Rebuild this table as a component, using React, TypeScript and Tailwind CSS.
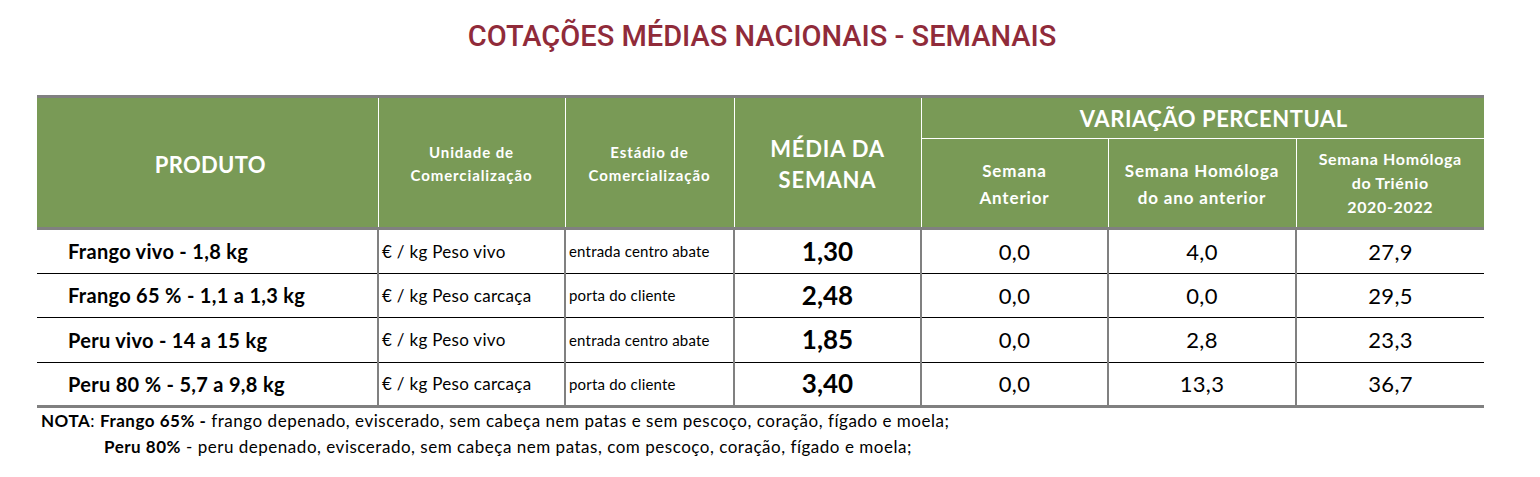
import React from 'react';

const rows = [
  { produto: 'Frango vivo - 1,8 kg', unidade: '€ / kg Peso vivo', estadio: 'entrada centro abate', media: '1,30', anterior: '0,0', homologa: '4,0', trienio: '27,9' },
  { produto: 'Frango 65 % - 1,1 a 1,3 kg', unidade: '€ / kg Peso carcaça', estadio: 'porta do cliente', media: '2,48', anterior: '0,0', homologa: '0,0', trienio: '29,5' },
  { produto: 'Peru vivo - 14 a 15 kg', unidade: '€ / kg Peso vivo', estadio: 'entrada centro abate', media: '1,85', anterior: '0,0', homologa: '2,8', trienio: '23,3' },
  { produto: 'Peru 80 % - 5,7 a 9,8 kg', unidade: '€ / kg Peso carcaça', estadio: 'porta do cliente', media: '3,40', anterior: '0,0', homologa: '13,3', trienio: '36,7' },
];

const head = 'bg-[#799a56] text-white font-bold text-center align-middle border-white';
const cell = 'border-b border-b-black border-l-2 border-l-[#808080] align-middle';

export default function App() {
  return (
    <div className="w-[1540px] h-[477px] bg-white overflow-hidden" style={{ fontFamily: 'Lato, "Open Sans", sans-serif' }}>
      <h1
        className="pt-[17px] pr-[16px] h-[95px] text-center text-[29px] leading-[38px] font-medium text-[#902b3a]"
        style={{ fontFamily: 'Roboto, "Liberation Sans", sans-serif' }}
      >
        COTAÇÕES MÉDIAS NACIONAIS - SEMANAIS
      </h1>

      <table className="ml-[37px] w-[1447px] table-fixed border-collapse border-t-[3px] border-t-[#808080]">
        <colgroup>
          <col className="w-[341px]" />
          <col className="w-[187px]" />
          <col className="w-[169px]" />
          <col className="w-[187px]" />
          <col className="w-[187px]" />
          <col className="w-[188px]" />
          <col className="w-[188px]" />
        </colgroup>
        <thead>
          <tr className="h-[42px]">
            <th rowSpan={2} className={`${head} text-[22px] tracking-[0.3px] pt-[3px] pl-[6px]`}>PRODUTO</th>
            <th rowSpan={2} className={`${head} border-l text-[15px] tracking-[0.9px] leading-[23px] pt-[2px]`}>
              Unidade de<br />Comercialização
            </th>
            <th rowSpan={2} className={`${head} border-l text-[15px] tracking-[0.9px] leading-[23px] pt-[2px]`}>
              Estádio de<br />Comercialização
            </th>
            <th rowSpan={2} className={`${head} border-l text-[22px] tracking-[0.8px] leading-[31px] pt-[3px]`}>
              MÉDIA DA<br />SEMANA
            </th>
            <th colSpan={3} className={`${head} border-l border-b text-[22px] tracking-[0.55px] pl-[22px]`}>VARIAÇÃO PERCENTUAL</th>
          </tr>
          <tr className="h-[90px]">
            <th className={`${head} border-l text-[17px] tracking-[0.85px] leading-[27px] pt-[2px]`}>
              Semana<br />Anterior
            </th>
            <th className={`${head} border-l text-[17px] tracking-[0.85px] leading-[27px] pt-[2px]`}>
              Semana Homóloga<br />do ano anterior
            </th>
            <th className={`${head} border-l text-[16px] tracking-[0.65px] leading-[24px]`}>
              Semana Homóloga<br />do Triénio<br />2020-2022
            </th>
          </tr>
        </thead>
        <tbody>
          {rows.map((r, i) => {
            const edge = i === 0 ? 'border-t-[3px] border-t-[#808080]' : '';
            const last = i === rows.length - 1 ? 'border-b-[3px] !border-b-[#808080]' : '';
            return (
              <tr key={i} className="h-[44.5px] text-black">
                <td className={`border-b border-b-black align-middle pl-[31px] text-[20px] tracking-[0.3px] font-bold ${edge} ${last}`}>{r.produto}</td>
                <td className={`${cell} ${edge} ${last} pl-[3px] text-[17px] tracking-[0.3px]`}>{r.unidade}</td>
                <td className={`${cell} ${edge} ${last} pl-[3px] text-[15px] tracking-[0.2px]`}>{r.estadio}</td>
                <td className={`${cell} ${edge} ${last} text-center text-[26px] font-bold`}>{r.media}</td>
                <td className={`${cell} ${edge} ${last} text-center text-[22px] tracking-[0.3px]`}>{r.anterior}</td>
                <td className={`${cell} ${edge} ${last} text-center text-[22px] tracking-[0.3px]`}>{r.homologa}</td>
                <td className={`${cell} ${edge} ${last} text-center text-[22px] tracking-[0.3px]`}>{r.trienio}</td>
              </tr>
            );
          })}
        </tbody>
      </table>

      <div className="pl-[41px] text-[17px] tracking-[0.52px] leading-[26px] text-black">
        <p>
          <span className="font-bold">NOTA</span>: <span className="font-bold">Frango 65% -</span> frango depenado, eviscerado, sem cabeça nem patas e sem pescoço, coração, fígado e moela;
        </p>
        <p className="pl-[63px]">
          <span className="font-bold">Peru 80%</span> - peru depenado, eviscerado, sem cabeça nem patas, com pescoço, coração, fígado e moela;
        </p>
      </div>
    </div>
  );
}
